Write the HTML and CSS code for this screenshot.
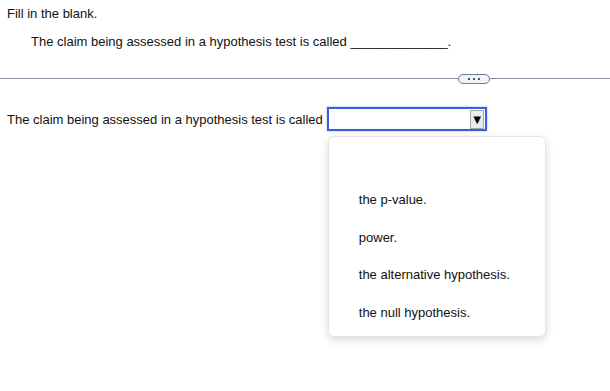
FILE: index.html
```html
<!DOCTYPE html>
<html>
<head>
<meta charset="utf-8">
<link rel="stylesheet" href="styles.css">
</head>
<body>
<div class="page">
  <div class="prompt">Fill in the blank.</div>
  <div class="question">The claim being assessed in a hypothesis test is called <span class="blank">______________</span>.</div>
  <div class="divider">
    <div class="line"></div>
    <div class="pill"><span></span><span></span><span></span></div>
    <div class="line rest"></div>
  </div>
  <div class="answer">
    <span class="label">The claim being assessed in a hypothesis test is called</span>
    <div class="select-wrap">
      <div class="select"><div class="arrow">&#9660;</div></div>
      <div class="menu">
        <div class="opt">the p-value.</div>
        <div class="opt">power.</div>
        <div class="opt">the alternative hypothesis.</div>
        <div class="opt">the null hypothesis.</div>
      </div>
    </div>
  </div>
</div>
</body>
</html>
```

FILE: styles.css
```css
html, body {
  margin: 0;
  padding: 0;
  background: #ffffff;
}
body {
  font-family: "Liberation Sans", Arial, sans-serif;
  font-size: 13px;
  color: #111;
  width: 610px;
  height: 391px;
  overflow: hidden;
}
.page {
  padding-top: 6px;
}
.prompt {
  padding-left: 7px;
  line-height: 15px;
}
.question {
  padding-left: 31px;
  margin-top: 13px;
  line-height: 15px;
}
.blank {
  letter-spacing: -0.3px;
}
.divider {
  display: flex;
  align-items: center;
  margin-top: 24px;
  height: 11px;
}
.line {
  width: 458px;
  height: 1px;
  background: #8893a6;
}
.line.rest {
  flex: 1;
  width: auto;
}
.pill {
  width: 30px;
  height: 8px;
  border: 1px solid #6e7b90;
  border-radius: 5px;
  background: #f1f3f6;
  display: flex;
  align-items: center;
  justify-content: center;
  gap: 3px;
}
.pill span {
  width: 2px;
  height: 2px;
  background: #4a5568;
}
.answer {
  display: flex;
  align-items: center;
  margin-top: 23px;
  padding-left: 7px;
}
.label {
  line-height: 15px;
  margin-right: 4px;
}
.select-wrap {
  position: relative;
}
.select {
  width: 155px;
  height: 20px;
  border: 2px solid #3a5fd9;
  box-shadow: 0 0 2px rgba(58, 95, 217, 0.5);
  display: flex;
  align-items: center;
  justify-content: flex-end;
  padding-right: 1px;
  background: #fff;
}
.arrow {
  width: 12px;
  height: 17px;
  background: #ebebeb;
  border: 1px solid #a8a8a8;
  font-size: 13px;
  line-height: 17px;
  text-align: center;
  color: #000;
}
.menu {
  position: absolute;
  left: 1px;
  top: 29px;
  width: 218px;
  height: 201px;
  background: #fff;
  border: 1px solid #e6e6e6;
  border-radius: 6px;
  box-shadow: 0 3px 8px rgba(0, 0, 0, 0.15);
  box-sizing: border-box;
  padding-top: 55px;
  padding-left: 30px;
}
.opt {
  height: 37.7px;
  line-height: 15px;
  color: #111;
}
```
